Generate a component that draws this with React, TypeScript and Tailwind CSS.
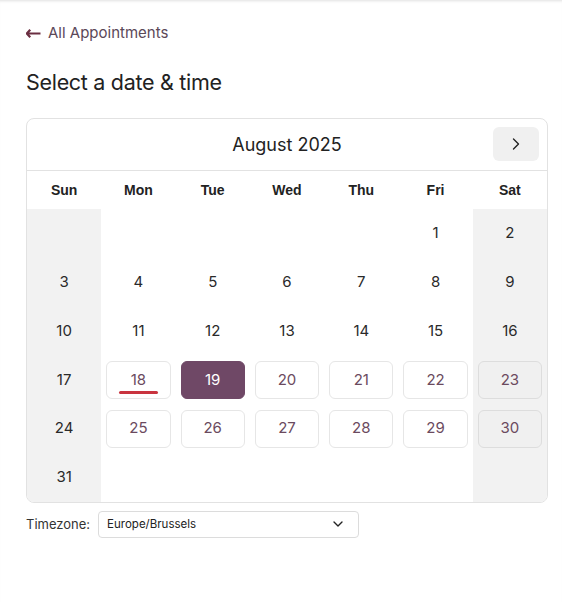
import { ChevronRight, ChevronDown } from 'lucide-react'

const dayNames = ['Sun', 'Mon', 'Tue', 'Wed', 'Thu', 'Fri', 'Sat']

// null = empty cell, available days get a bordered button
const available = [18, 19, 20, 21, 22, 23, 25, 26, 27, 28, 29, 30]
const selected = 19
const today = 18

function buildCells() {
    const cells: (number | null)[] = []
    for (let i = 0; i < 5; i++) cells.push(null)
    for (let d = 1; d <= 31; d++) cells.push(d)
    while (cells.length < 42) cells.push(null)
    return cells
}

export default function App() {
    const cells = buildCells()

    return (
        <div className="min-h-[602px] bg-white shadow-[inset_0_3px_3px_-2px_rgba(0,0,0,0.12)] px-[26px] pt-[23px] font-['Inter',sans-serif]">
            {/* Back link */}
            <a className="flex items-center gap-[7px] h-[20px] text-[15px] text-[#5b4858]">
                <svg width="15" height="9" viewBox="0 0 15 9" className="text-[#6b2f42]">
                    <path d="M4.2 0.8 L0.9 4.5 L4.2 8.2 M1 4.5 H14.5" stroke="currentColor" strokeWidth="2.2" fill="none" />
                </svg>
                <span>All Appointments</span>
            </a>

            <h1 className="mt-[25px] text-[21.5px] leading-[28px] text-[#222] tracking-[-0.3px]">Select a date &amp; time</h1>

            {/* Calendar */}
            <div className="mt-[22px] w-[522px] border border-[#e2e2e2] rounded-[8px] overflow-hidden">
                <div className="relative h-[52px] flex items-center justify-center border-b border-[#e2e2e2]">
                    <span className="text-[18px] text-[#222]">August 2025</span>
                    <button className="absolute right-[8px] top-[8px] w-[46px] h-[34px] rounded-[6px] bg-[#f0f0f0] flex items-center justify-center text-[#222]">
                        <ChevronRight size={20} strokeWidth={1.6} />
                    </button>
                </div>

                <div className="grid grid-cols-7">
                    {dayNames.map((d) => (
                        <div key={d} className="h-[38px] flex items-center justify-center text-[14px] font-bold text-[#222] font-['Liberation_Sans',sans-serif]">
                            {d}
                        </div>
                    ))}
                    {cells.map((d, i) => {
                        const weekend = i % 7 === 0 || i % 7 === 6
                        const isAvail = d !== null && available.includes(d)
                        const isSel = d === selected
                        return (
                            <div key={i} className={`h-[48.8px] flex items-center justify-center px-[5px] ${weekend ? 'bg-[#f2f2f2]' : ''}`}>
                                {d !== null && !isAvail && (
                                    <span className="text-[15px] text-[#2a2a2a]">{d}</span>
                                )}
                                {isAvail && (
                                    <button
                                        className={`relative w-full h-[38px] rounded-[6px] border text-[15px] flex items-center justify-center ${
                                            isSel
                                                ? 'bg-[#6f4866] border-[#6f4866] text-white'
                                                : weekend
                                                  ? 'bg-[#f0f0f0] border-[#dddddd] text-[#6b4a5e]'
                                                  : 'bg-white border-[#e6e6e6] text-[#6b4a5e]'
                                        }`}
                                    >
                                        {d}
                                        {d === today && (
                                            <span className="absolute left-[12px] right-[12px] bottom-[4px] h-[3px] rounded-full bg-[#c9343f]" />
                                        )}
                                    </button>
                                )}
                            </div>
                        )
                    })}
                </div>
            </div>

            {/* Timezone */}
            <div className="mt-[8px] flex items-center gap-[8px]">
                <span className="text-[13px] text-[#333]">Timezone:</span>
                <div className="w-[261px] h-[27px] border border-[#dcdcdc] rounded-[4px] flex items-center justify-between pl-[8px] pr-[12px]">
                    <span className="text-[11.5px] text-[#222]">Europe/Brussels</span>
                    <ChevronDown size={16} strokeWidth={2} className="text-[#222]" />
                </div>
            </div>
        </div>
    )
}
